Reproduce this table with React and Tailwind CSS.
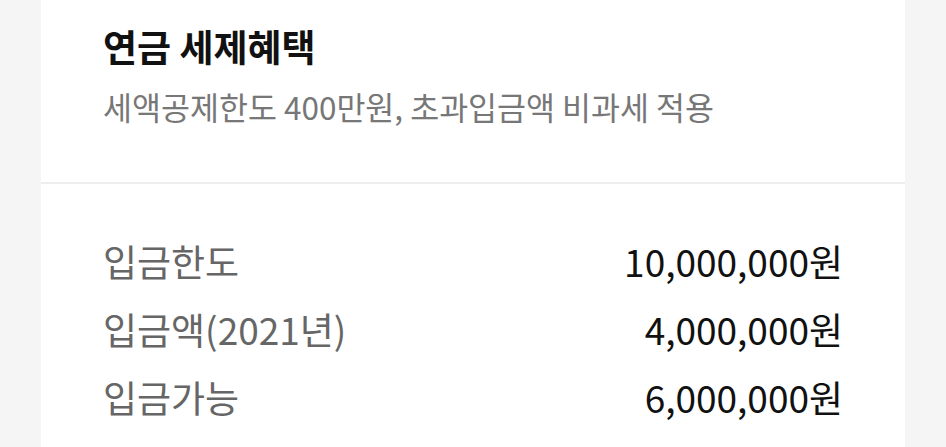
import React from "react";

const ROWS = [
  { label: "입금한도", value: "10,000,000원" },
  { label: "입금액(2021년)", value: "4,000,000원" },
  { label: "입금가능", value: "6,000,000원" },
];

const App = () => {
  return (
    <div
      className="w-[946px] h-[447px] overflow-hidden bg-[#f5f5f5] px-[41px]"
      style={{ fontFamily: '"Noto Sans CJK KR", "Noto Sans", sans-serif' }}
    >
      <div className="bg-white h-full">
        {/* Header */}
        <div className="h-[184px] px-[62px] pt-[22px] border-b-2 border-[#eeeeee]">
          <h2 className="text-[37px] leading-[48px] font-bold text-[#111111]">
            연금 세제혜택
          </h2>
          <p className="mt-[14px] text-[31.5px] leading-[44px] text-[#777777]">
            세액공제한도 400만원, 초과입금액 비과세 적용
          </p>
        </div>

        {/* Amount rows */}
        <div className="px-[62px] pt-[54px] flex flex-col gap-[20px]">
          {ROWS.map((row) => (
            <div key={row.label} className="flex items-center justify-between h-[48px]">
              <span className="text-[37px] text-[#666666]">{row.label}</span>
              <span className="text-[37px] text-[#111111]">{row.value}</span>
            </div>
          ))}
        </div>
      </div>
    </div>
  );
};

export default App;
